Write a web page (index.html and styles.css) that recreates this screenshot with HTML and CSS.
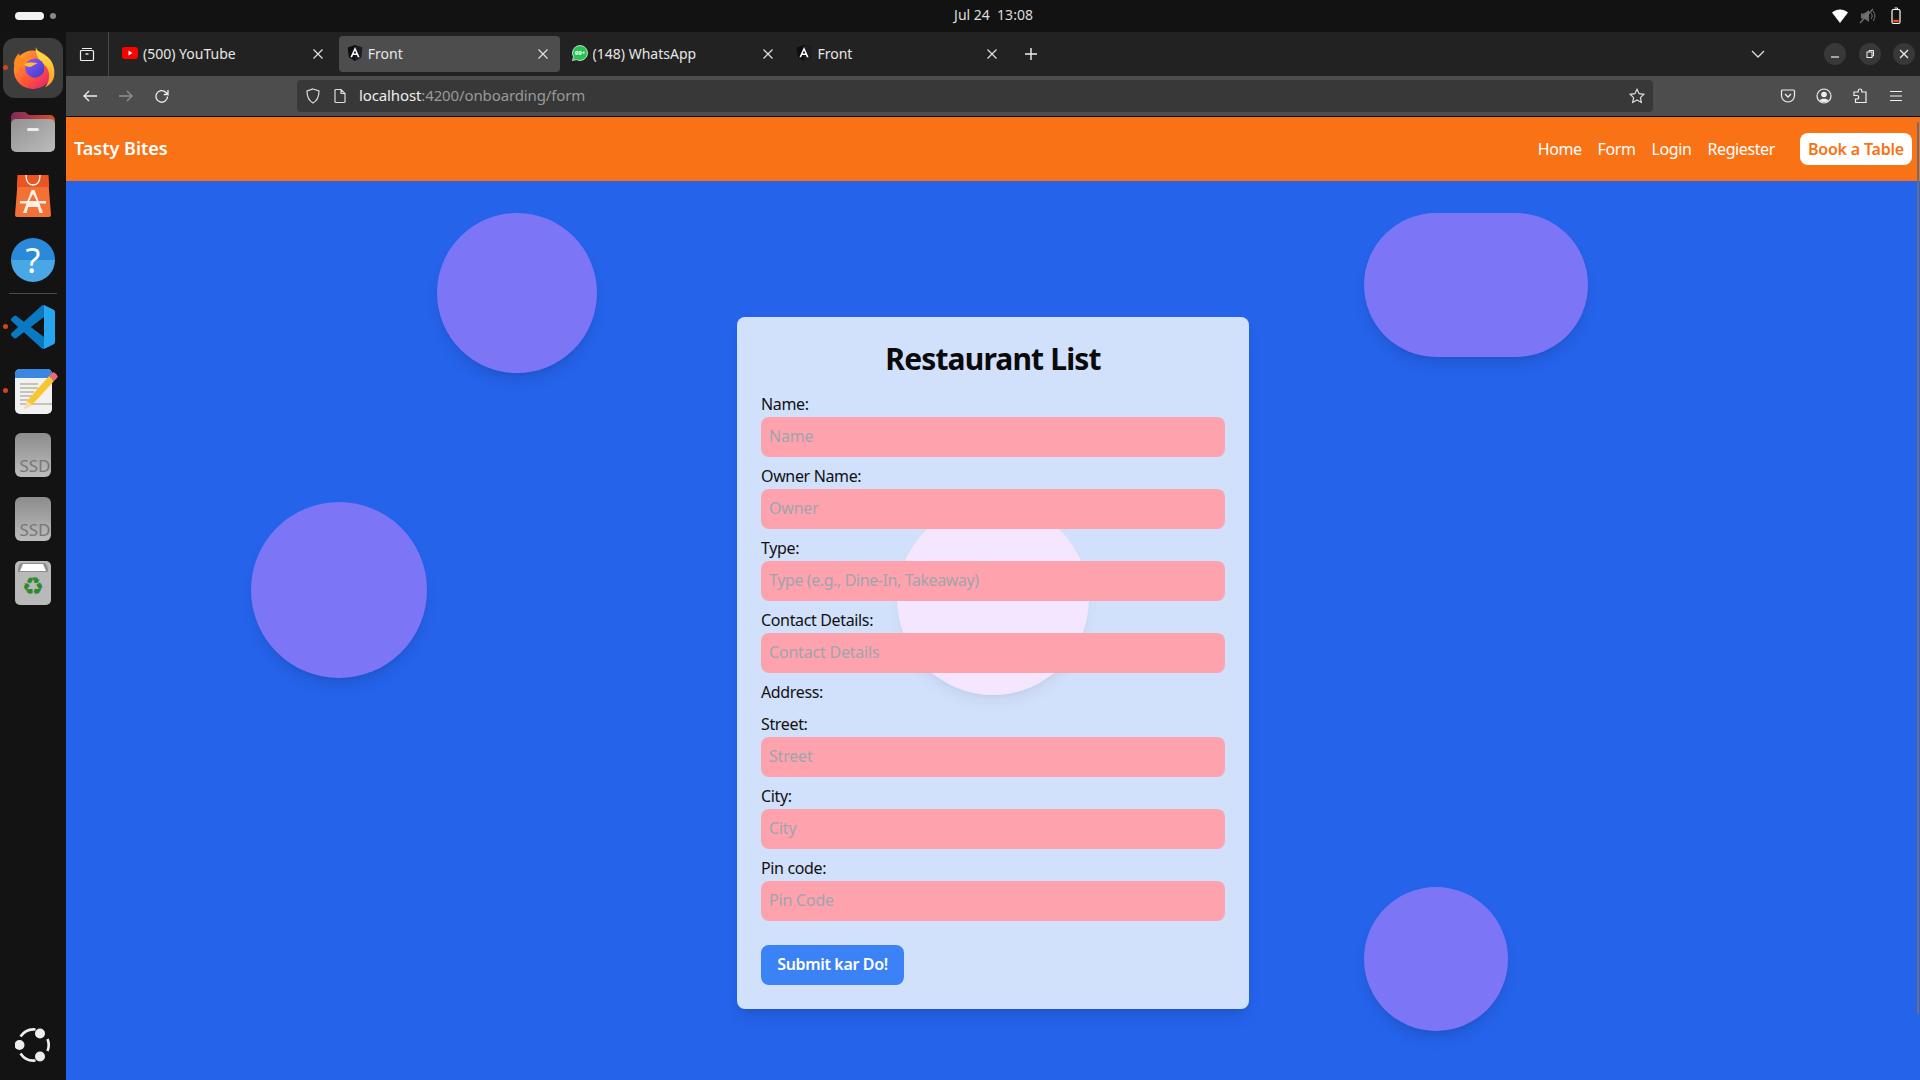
FILE: index.html
```html
<!DOCTYPE html>
<html lang="en">
<head>
<meta charset="utf-8">
<title>Front</title>
<link rel="stylesheet" href="styles.css">
</head>
<body>
<svg class="defs" width="0" height="0">
  <defs>
    <symbol id="ng" viewBox="0 0 24 24"><path d="M12 0 1 3.900l1.700 14.500L12 24l9.300-5.600L23 3.900z" fill="#0d0d12"/><path d="M12 0v24l9.300-5.600L23 3.900z" fill="#1c1c24"/><path d="M12 3 5.100 18.400h2.600l1.400-3.400h5.800l1.400 3.400h2.600zm-2 9.900L12 8.100l2 4.800z" fill="#fff"/></symbol>
    <symbol id="x" viewBox="0 0 12 12"><path d="M1.500 1.500l9 9m0-9l-9 9" stroke="#e6e6e6" stroke-width="1.100" fill="none"/></symbol>
    <linearGradient id="fxa" x1="0" y1="0" x2="1" y2="1"><stop offset="0" stop-color="#ffb52e"/><stop offset=".55" stop-color="#ff5634"/><stop offset="1" stop-color="#e31587"/></linearGradient>
    <linearGradient id="fxb" x1="0" y1="0" x2="0" y2="1"><stop offset="0" stop-color="#ffe84a"/><stop offset="1" stop-color="#ff9a1f"/></linearGradient>
    <linearGradient id="fxc" x1="0" y1="0" x2="1" y2="1"><stop offset="0" stop-color="#9059ff"/><stop offset="1" stop-color="#3b3bc4"/></linearGradient>
    <linearGradient id="fold" x1="0" y1="0" x2="1" y2="1"><stop offset="0" stop-color="#929292"/><stop offset="1" stop-color="#bcbcbc"/></linearGradient>
    <linearGradient id="foldb" x1="0" y1="0" x2="1" y2="0"><stop offset="0" stop-color="#7e2a5a"/><stop offset="1" stop-color="#d4502a"/></linearGradient>
  </defs>
</svg>

<header class="topbar">
  <div class="workspaces"><span class="ws-pill"></span><span class="ws-dot"></span></div>
  <div class="clock">Jul 24&nbsp;&nbsp;13:08</div>
  <div class="tray">
    <svg class="tray-icon" viewBox="0 0 18 16"><path d="M1 4.500C6 .5 12 .5 17 4.500L9 15z" fill="#fff"/></svg>
    <svg class="tray-icon" viewBox="0 0 18 16"><path d="M2 5.500h3L10 2v12L5 10.500H2z" fill="#6b6b6b"/><path d="M12 5c1.500 1.800 1.500 4.200 0 6m2-8c2.500 3 2.500 7 0 10" stroke="#777" fill="none"/><path d="M1 15 14 1" stroke="#777" stroke-width="1.200"/></svg>
    <svg class="tray-icon" viewBox="0 0 18 18"><path d="M7.500 1h3v1.500" stroke="#fff" fill="none"/><rect x="5" y="2.500" width="8" height="14" rx="1.500" stroke="#fff" stroke-width="1.200" fill="none"/><rect x="6.300" y="12.800" width="5.400" height="2.400" fill="#e95420"/></svg>
  </div>
</header>

<div class="desktop">
  <nav class="dock">
    <div class="dock-item dock-active">
      <span class="run-dot"></span>
      <div class="fx-tile">
        <svg class="i-fx" viewBox="0 0 48 48">
          <circle cx="24" cy="26" r="21" fill="url(#fxa)"/>
          <path d="M27 1c1 6 10 7 15 13 5 6 6 13 5 19-1 6-5 10-10 12 6-7 6-17 1-23-4-5-11-7-11-21z" fill="url(#fxb)"/>
          <path d="M3 19c1-5 3-9 6-11 0 3 2 5 4 6 4-3 10-3 14 0-6 0-8 2-9 4l-6 1c-2 1-3 3-3 7-3-1-5-4-6-7z" fill="#ff8a1f"/>
          <circle cx="26" cy="24" r="10.500" fill="url(#fxc)"/>
          <path d="M14 20c5-3 11-2 15-1-3 1-6 3-8 4-3 0-5-1-7-3z" fill="#ffc12e"/>
        </svg>
      </div>
    </div>
    <div class="dock-item">
      <svg class="i-44" viewBox="0 0 44 40"><path d="M0 5a5 5 0 0 1 5-5h9l4 3h21a5 5 0 0 1 5 5v8H0z" fill="url(#foldb)"/><rect y="7" width="44" height="33" rx="5" fill="url(#fold)"/><rect x="16" y="16" width="12" height="3" rx="1.500" fill="#eee"/></svg>
    </div>
    <div class="dock-item">
      <svg class="i-store" viewBox="0 0 36 42"><path d="M3 2a2 2 0 0 1 2-2h26a2 2 0 0 1 2 2l3 38a2 2 0 0 1-2 2H2a2 2 0 0 1-2-2z" fill="#f47136"/><path d="M2.500 0h31l.7 12H1.800z" fill="#e95420"/><path d="M11 0c0 7 3 10 7 10s7-3 7-10" stroke="#fff" stroke-width="1.300" fill="none"/><path d="M16.500 15h3L28 38h-3.500l-1.700-6H13.200l-1.700 6H8zm-2.300 11h7.600L18 19z M5 26h26v2.500H5z" fill="#fdeee6"/></svg>
    </div>
    <div class="dock-item">
      <div class="help">?</div>
    </div>
    <div class="dock-sep"></div>
    <div class="dock-item">
      <span class="run-dot"></span>
      <svg class="i-vs" viewBox="0 0 24 24"><path d="M23.150 2.587L18.210.21a1.494 1.494 0 0 0-1.705.29l-9.460 8.630-4.120-3.128a.999.999 0 0 0-1.276.057L.327 7.261A1 1 0 0 0 .326 8.740L3.899 12 .326 15.260a1 1 0 0 0 .001 1.479L1.650 17.940a.999.999 0 0 0 1.276.057l4.120-3.128 9.460 8.630a1.492 1.492 0 0 0 1.704.29l4.942-2.377A1.500 1.500 0 0 0 24 20.060V3.939a1.500 1.500 0 0 0-.85-1.352zm-5.146 14.861L10.826 12l7.178-5.448v10.896z" fill="#0b78c2"/><path d="M18 0l5.150 2.587A1.500 1.500 0 0 1 24 3.940V20.060a1.500 1.500 0 0 1-.85 1.350L18 24z" fill="#26a6ef"/></svg>
    </div>
    <div class="dock-item">
      <span class="run-dot"></span>
      <svg class="i-note" viewBox="0 0 44 46"><rect y="1" width="37" height="45" rx="5" fill="#f1f1f1"/><path d="M0 10V6a5 5 0 0 1 5-5h27a5 5 0 0 1 5 5v4z" fill="#3a86e0"/><path d="M5 16h18M5 20h18M5 24h14M5 28h12M5 32h8M5 36h32" stroke="#c7c4b6" stroke-width="2"/><path d="M9 41l3-8L34 8l5 5-22 24z" fill="#f8c630"/><path d="M9 41l3-8 5 4z" fill="#f2dcb0"/><path d="M34 8l3-3a2 2 0 0 1 3 0l2 2a2 2 0 0 1 0 3l-3 3z" fill="#ec6a75"/></svg>
    </div>
    <div class="dock-item"><div class="ssd"><span class="ssd-label">SSD</span></div></div>
    <div class="dock-item"><div class="ssd"><span class="ssd-label">SSD</span></div></div>
    <div class="dock-item">
      <div class="trash">
        <svg class="trash-lid" viewBox="0 0 36 10"><path d="M3 10c0-5 1-8 3-9h24c2 1 3 4 3 9z" fill="#8d8d8d"/><path d="M5 9l3-7h20l3 7z" fill="#fff"/></svg>
        <span class="recycle">♻</span>
      </div>
    </div>
    <div class="dock-item dock-bottom">
      <svg class="i-ubuntu" viewBox="0 0 36 36"><path d="M5.500 9.500A16 16 0 0 1 20.500 2.500M32.500 12A16 16 0 0 1 32.500 24M5.500 26.500A16 16 0 0 0 20.500 33.500" stroke="#eee" stroke-width="2.600" fill="none"/><circle cx="4.500" cy="18" r="5" fill="#eee"/><circle cx="25" cy="6.500" r="5" fill="#eee"/><circle cx="25" cy="29.500" r="5" fill="#eee"/></svg>
    </div>
  </nav>

  <div class="browser">
    <div class="tabbar">
      <div class="tabs-btn">
        <svg class="i-16" viewBox="0 0 16 16"><path d="M3 2.500h10M1.500 5.500a1 1 0 0 1 1-1h11a1 1 0 0 1 1 1v8a1 1 0 0 1-1 1h-11a1 1 0 0 1-1-1z" stroke="#eee" stroke-width="1.200" fill="none"/><path d="M6.500 8h3" stroke="#eee" stroke-width="1.400"/></svg>
      </div>
      <div class="tab">
        <svg class="favicon" viewBox="0 0 16 16"><rect y="2" width="16" height="12" rx="3" fill="#f00"/><path d="M6.500 5.500l4 2.500-4 2.500z" fill="#fff"/></svg>
        <span class="tab-title">(500) YouTube</span>
        <svg class="tab-close" viewBox="0 0 12 12"><use href="#x"/></svg>
      </div>
      <div class="tab tab-active">
        <svg class="favicon" viewBox="0 0 24 24"><use href="#ng"/></svg>
        <span class="tab-title">Front</span>
        <svg class="tab-close" viewBox="0 0 12 12"><use href="#x"/></svg>
      </div>
      <div class="tab">
        <svg class="favicon" viewBox="0 0 16 16"><path d="M8 .5a7.500 7.500 0 0 1 0 15 7.500 7.500 0 0 1-3.500-.9L.5 15.500l1-3.700A7.500 7.500 0 0 1 8 .5z" fill="#25c254" stroke="#fff" stroke-width=".7"/><text x="8" y="10.300" class="wa-text">99+</text></svg>
        <span class="tab-title">(148) WhatsApp</span>
        <svg class="tab-close" viewBox="0 0 12 12"><use href="#x"/></svg>
      </div>
      <div class="tab">
        <svg class="favicon" viewBox="0 0 24 24"><use href="#ng"/></svg>
        <span class="tab-title">Front</span>
        <svg class="tab-close" viewBox="0 0 12 12"><use href="#x"/></svg>
      </div>
      <svg class="new-tab" viewBox="0 0 14 14"><path d="M7 1v12M1 7h12" stroke="#eee" stroke-width="1.400"/></svg>
      <svg class="tab-list" viewBox="0 0 14 14"><path d="M1 4l6 6 6-6" stroke="#ddd" stroke-width="1.300" fill="none"/></svg>
      <div class="winctl">
        <span class="winbtn"><svg class="i-10" viewBox="0 0 10 10"><path d="M1 8h8" stroke="#eee" stroke-width="1.200"/></svg></span>
        <span class="winbtn"><svg class="i-10" viewBox="0 0 10 10"><path d="M4 3V1.500h4.500v5.500H7" stroke="#eee" fill="none"/><rect x="2" y="3" width="5" height="5.500" stroke="#eee" fill="none"/></svg></span>
        <span class="winbtn"><svg class="i-10" viewBox="0 0 10 10"><path d="M1 1l8 8m0-8l-8 8" stroke="#eee" stroke-width="1.200"/></svg></span>
      </div>
    </div>

    <div class="toolbar">
      <svg class="tool" viewBox="0 0 16 16"><path d="M15 8H2M7 3 2 8l5 5" stroke="#eee" stroke-width="1.300" fill="none"/></svg>
      <svg class="tool" viewBox="0 0 16 16"><path d="M1 8h13M9 3l5 5-5 5" stroke="#8f8f8f" stroke-width="1.300" fill="none"/></svg>
      <svg class="tool" viewBox="0 0 16 16"><path d="M13.500 8.500a5.800 5.800 0 1 1-1.700-4.200L14 6.500V2M14 6.500H9.800" stroke="#eee" stroke-width="1.300" fill="none"/></svg>
      <div class="urlbar">
        <svg class="i-16 url-shield" viewBox="0 0 16 16"><path d="M8 1l6 2c0 6-1.500 9.500-6 12C3.500 12.500 2 9 2 3z" stroke="#ddd" stroke-width="1.200" fill="none"/></svg>
        <svg class="i-16 url-page" viewBox="0 0 16 16"><path d="M3 2.500a1 1 0 0 1 1-1h5l4 4v8a1 1 0 0 1-1 1H4a1 1 0 0 1-1-1zM9 1.500v4h4" stroke="#ddd" stroke-width="1.200" fill="none"/></svg>
        <span class="url-text"><span class="url-host">localhost</span>:4200/onboarding/form</span>
        <svg class="i-16 url-star" viewBox="0 0 16 16"><path d="M8 1.300l2.100 4.400 4.800.6-3.500 3.300.9 4.800L8 12l-4.300 2.400.9-4.800L1.100 6.300l4.800-.6z" stroke="#ddd" stroke-width="1.200" fill="none"/></svg>
      </div>
      <div class="tool-right">
        <svg class="tool" viewBox="0 0 16 16"><path d="M1.500 3a1 1 0 0 1 1-1h11a1 1 0 0 1 1 1v4.500a6.500 6.500 0 0 1-13 0z" stroke="#eee" stroke-width="1.200" fill="none"/><path d="M5 6l3 3 3-3" stroke="#eee" stroke-width="1.300" fill="none"/></svg>
        <svg class="tool" viewBox="0 0 16 16"><circle cx="8" cy="8" r="7" stroke="#eee" stroke-width="1.200" fill="none"/><circle cx="8" cy="6.500" r="2.800" fill="#eee"/><path d="M3.500 12.500c1-2.500 8-2.500 9 0-2 2-7 2-9 0z" fill="#eee"/></svg>
        <svg class="tool" viewBox="0 0 16 16"><path d="M8 1a1.800 1.800 0 0 1 1.800 1.800V4H14v10.500H3.500V11H5a1.500 1.500 0 0 0 0-3.500H2V4h4.200V2.800A1.800 1.800 0 0 1 8 1z" stroke="#eee" stroke-width="1.200" fill="none"/></svg>
        <svg class="tool" viewBox="0 0 16 16"><path d="M2 3.500h12M2 8h12M2 12.500h12" stroke="#eee" stroke-width="1.200"/></svg>
      </div>
    </div>

    <div class="page">
      <header class="navbar">
        <div class="brand">Tasty Bites</div>
        <div class="navlinks">
          <a class="navlink">Home</a>
          <a class="navlink">Form</a>
          <a class="navlink">Login</a>
          <a class="navlink">Regiester</a>
          <button class="book" type="button">Book a Table</button>
        </div>
      </header>
      <main class="stage">
        <span class="blob blob-a"></span>
        <span class="blob blob-b"></span>
        <span class="blob blob-c"></span>
        <span class="blob blob-d"></span>
        <section class="card">
          <span class="blob-center"></span>
          <form class="form">
            <h1 class="title">Restaurant List</h1>
            <label class="field"><span class="lbl">Name:</span><input class="inp" placeholder="Name"></label>
            <label class="field"><span class="lbl">Owner Name:</span><input class="inp" placeholder="Owner"></label>
            <label class="field"><span class="lbl">Type:</span><input class="inp inp-long" placeholder="Type (e.g., Dine-In, Takeaway)"></label>
            <label class="field"><span class="lbl">Contact Details:</span><input class="inp" placeholder="Contact Details"></label>
            <div class="field"><span class="lbl">Address:</span></div>
            <label class="field"><span class="lbl">Street:</span><input class="inp" placeholder="Street"></label>
            <label class="field"><span class="lbl">City:</span><input class="inp" placeholder="City"></label>
            <label class="field"><span class="lbl">Pin code:</span><input class="inp" placeholder="Pin Code"></label>
            <button class="submit" type="button">Submit kar Do!</button>
          </form>
        </section>
        <span class="scrollthumb"></span>
      </main>
    </div>
  </div>
</div>
</body>
</html>
```
FILE: styles.css
```css
* { box-sizing: border-box; }
html, body { margin: 0; height: 100%; overflow: hidden; }
body { width: 1920px; height: 1080px; background: #131313; font-family: "Noto Sans", "Open Sans", sans-serif; display: flex; flex-direction: column; }
.defs { position: absolute; }

.topbar { height: 32px; flex: none; background: #121212; display: flex; align-items: center; justify-content: space-between; position: relative; color: #ddd; }
.workspaces { display: flex; align-items: center; gap: 6px; margin-left: 15px; }
.ws-pill { width: 29px; height: 8px; background: #f2f2f2; border-radius: 4px; }
.ws-dot { width: 6px; height: 6px; background: #8a8a8a; border-radius: 50%; }
.clock { position: absolute; left: 954px; top: 6px; width: 79px; text-align: center; font-size: 14px; line-height: 18px; white-space: nowrap; }
.tray { display: flex; gap: 10px; margin-right: 15px; }
.tray-icon { width: 18px; height: 18px; }

.desktop { flex: 1; display: flex; min-height: 0; }
.dock { width: 66px; flex: none; background: #131313; display: flex; flex-direction: column; padding: 4px 0 3px; }
.dock-item { height: 64px; flex: none; display: flex; align-items: center; justify-content: center; position: relative; }
.dock-bottom { margin-top: auto; }
.dock-sep { height: 1px; width: 48px; margin: 1px auto 1px; background: #4b4b4b; flex: none; }
.run-dot { position: absolute; left: 3px; top: 29px; width: 5px; height: 5px; border-radius: 50%; background: #d4441c; z-index: 1; }
.fx-tile { width: 60px; height: 60px; border-radius: 12px; background: #3d3d3d; display: flex; align-items: center; justify-content: center; }
.i-fx { width: 44px; height: 44px; }
.i-44 { width: 44px; height: 40px; }
.i-store { width: 36px; height: 42px; }
.help { width: 44px; height: 44px; border-radius: 50%; background: linear-gradient(#2a89d8 50%, #49a7e6 50%); color: #fff; font-size: 34px; font-weight: 400; line-height: 44px; text-align: center; }
.i-vs { width: 44px; height: 44px; }
.i-note { width: 44px; height: 46px; margin-left: 8px; }
.ssd { width: 36px; height: 44px; border-radius: 6px; background: linear-gradient(#8c8c8c, #bdbdbd); overflow: hidden; display: flex; align-items: flex-end; justify-content: center; padding-left: 4px; }
.ssd-label { font-size: 17px; line-height: 22px; color: #777; white-space: nowrap; }
.trash { width: 36px; height: 44px; border-radius: 5px; background: #b9b9b9; display: flex; flex-direction: column; align-items: center; overflow: hidden; }
.trash-lid { width: 36px; height: 10px; flex: none; margin-top: 1px; }
.recycle { font-family: "DejaVu Sans", sans-serif; font-size: 25px; line-height: 30px; color: #2c8a2c; }
.i-ubuntu { width: 36px; height: 36px; }

.browser { flex: 1; min-width: 0; display: flex; flex-direction: column; }
.tabbar { height: 44px; flex: none; background: #222; display: flex; align-items: center; color: #e6e6e6; font-size: 14px; }
.tabs-btn { width: 43px; height: 44px; flex: none; display: flex; align-items: center; justify-content: center; border-right: 1px solid #4a4a4a; margin-right: 5px; }
.i-16 { width: 16px; height: 16px; flex: none; }
.i-10 { width: 10px; height: 10px; }
.tab { width: 221px; height: 36px; flex: none; margin-right: 3.800px; border-radius: 4px; display: flex; align-items: center; padding: 0 11px 2px 8px; }
.tab-active { background: #4d4d4d; }
.favicon { width: 16px; height: 16px; flex: none; margin-right: 5px; }
.wa-text { font-size: 6px; font-weight: 700; fill: #fff; text-anchor: middle; }
.tab-title { flex: 1; white-space: nowrap; overflow: hidden; }
.tab-close { width: 12px; height: 12px; flex: none; margin-top: 2px; }
.new-tab { width: 14px; height: 14px; flex: none; margin-left: 11px; }
.tab-list { width: 14px; height: 14px; flex: none; margin-left: 713px; }
.winctl { display: flex; gap: 12.500px; margin-left: 59px; }
.winbtn { width: 22px; height: 22px; border-radius: 50%; background: #383838; display: flex; align-items: center; justify-content: center; }

.toolbar { height: 41px; flex: none; background: #4d4d4d; border-bottom: 1px solid #0c0c0c; display: flex; align-items: center; padding-left: 16px; }
.tool { width: 16px; height: 16px; flex: none; margin-right: 20px; }
.urlbar { width: 1356px; height: 32px; flex: none; margin-left: 107px; background: #383838; border-radius: 4px; display: flex; align-items: center; padding: 0 8px; font-size: 15px; letter-spacing: -.12px; color: #9a9a9a; }
.url-page { margin-left: 11px; }
.url-text { margin-left: 11px; flex: 1; white-space: nowrap; padding-bottom: 2px; }
.url-host { color: #eee; }
.tool-right { display: flex; margin-left: 127px; }

.page { flex: 1; min-height: 0; display: flex; flex-direction: column; }
.navbar { height: 64px; flex: none; background: #f97316; display: flex; align-items: center; justify-content: space-between; padding: 0 8px; color: #fff; }
.brand { font-size: 18px; font-weight: 600; padding-bottom: 2px; }
.navlinks { display: flex; align-items: center; gap: 16px; font-size: 16px; letter-spacing: -.4px; }
.navlink { color: #fff; }
.book { height: 32px; margin-left: 9px; padding: 0 8px; background: #fff; color: #f97316; border: 0; border-radius: 8px; font: 600 16px "Noto Sans", sans-serif; letter-spacing: -.2px; }

.stage { flex: 1; min-height: 0; background: #2563eb; position: relative; display: flex; justify-content: center; align-items: flex-start; padding-top: 136px; }
.blob { position: absolute; background: #7c76f6; box-shadow: 0 10px 15px -3px rgba(0,0,0,.1), 0 4px 6px -4px rgba(0,0,0,.1); border-radius: 50%; }
.blob-a { left: 371px; top: 32px; width: 160px; height: 160px; }
.blob-b { left: 1298px; top: 32px; width: 224px; height: 144px; border-radius: 72px; }
.blob-c { left: 185px; top: 321px; width: 176px; height: 176px; }
.blob-d { left: 1298px; top: 706px; width: 144px; height: 144px; }
.scrollthumb { position: absolute; right: 1px; top: -59px; width: 2px; height: 892px; background: #6b6f7c; border-radius: 1px; }

.card { width: 512px; height: 692px; flex: none; position: relative; background: #d1e0fb; border-radius: 8px; box-shadow: 0 10px 15px -3px rgba(0,0,0,.1), 0 4px 6px -4px rgba(0,0,0,.1); padding: 24px; }
.blob-center { position: absolute; left: 160px; top: 186px; width: 192px; height: 192px; border-radius: 50%; background: #f3e6fe; box-shadow: 0 10px 15px -3px rgba(0,0,0,.05), 0 4px 6px -4px rgba(0,0,0,.05); }
.form { position: relative; display: flex; flex-direction: column; }
.title { margin: 0 0 16px; font-size: 30px; line-height: 36px; font-weight: 700; text-align: center; color: #0a0a0a; letter-spacing: -.85px; }
.field { display: flex; flex-direction: column; margin-bottom: 8px; }
.lbl { font-size: 16px; line-height: 22px; height: 24px; color: #111; letter-spacing: -.35px; }
.inp { height: 40px; width: 100%; border: 0; outline: 0; padding: 0 8px 2px; background: #fea3ad; border-radius: 8px; font: 16px "Noto Sans", sans-serif; letter-spacing: -.2px; }
.inp-long { letter-spacing: -.4px; }
.inp::placeholder { color: #a0a3ae; opacity: 1; }
.submit { width: 143px; height: 40px; margin-top: 16px; padding: 0 0 2px; background: #3b82f6; color: #fff; border: 0; border-radius: 8px; font: 600 16px "Noto Sans", sans-serif; letter-spacing: -.35px; }
```
